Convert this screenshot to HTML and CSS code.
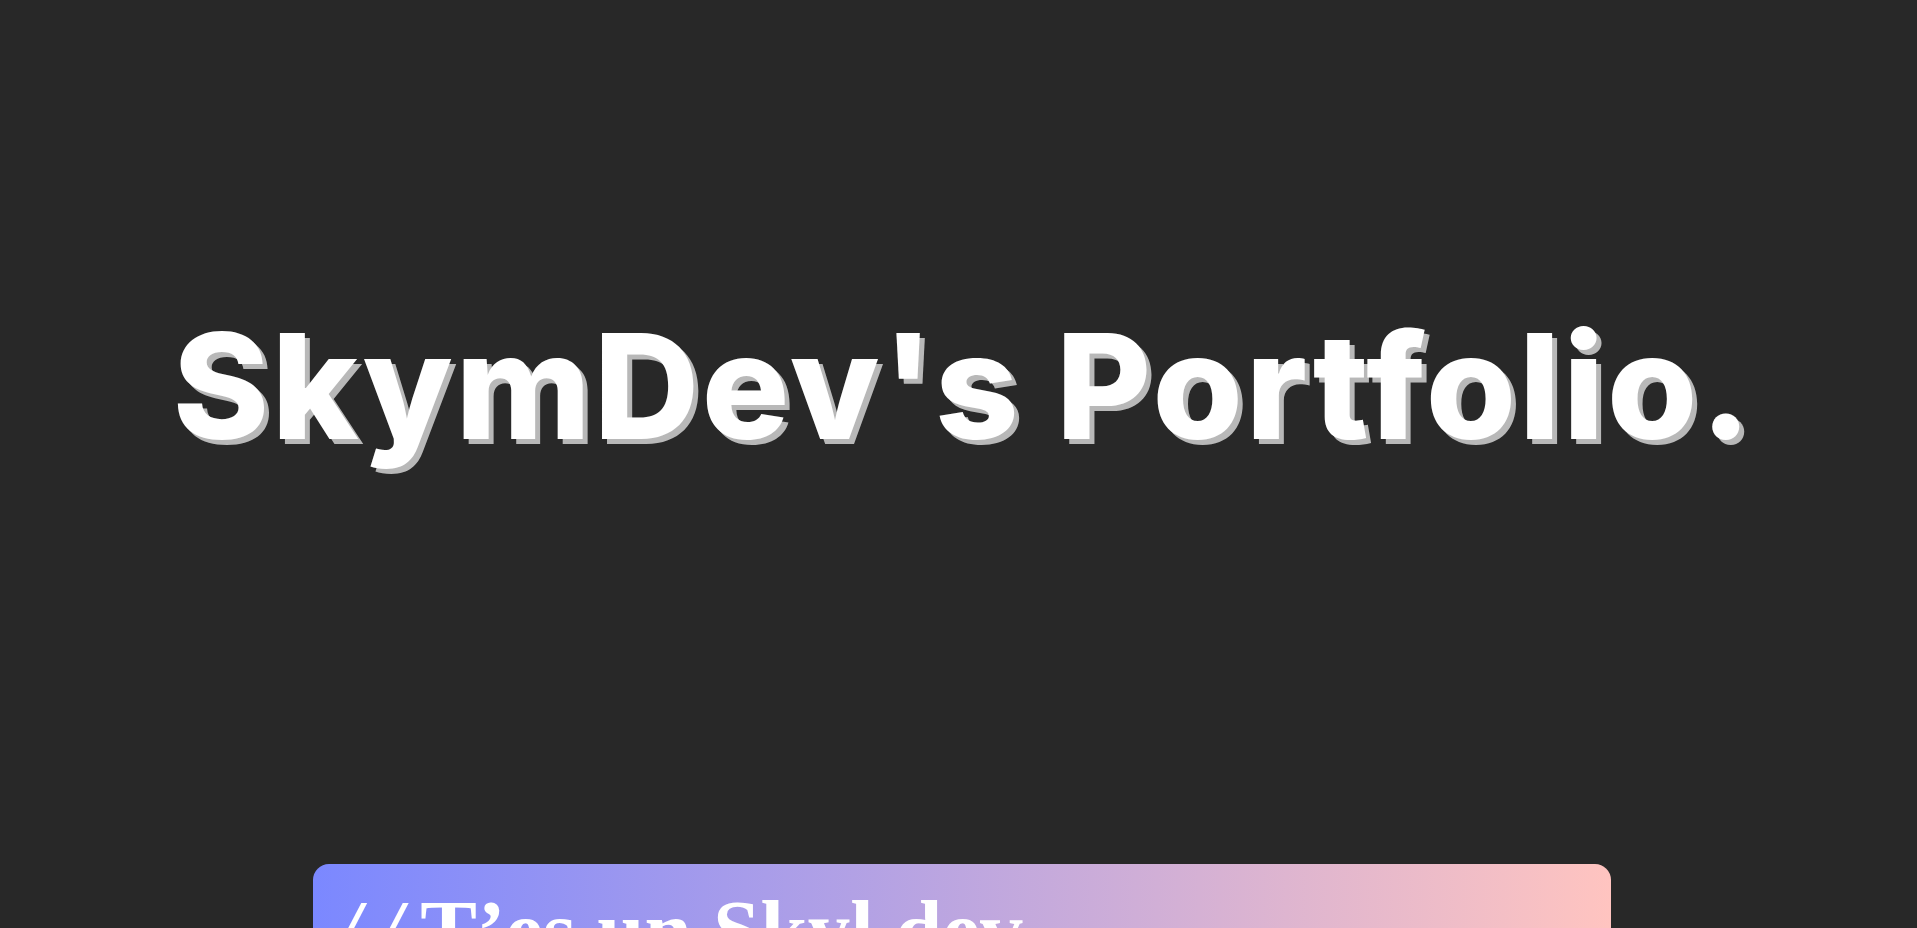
FILE: index.html
```html
<!DOCTYPE html>
<html lang="en">
<head>
<meta charset="utf-8">
<title>SkymDev's Portfolio</title>
<link rel="stylesheet" href="styles.css">
</head>
<body>
  <header class="hero">
    <h1 class="hero-title">SkymDev's Portfolio.</h1>
  </header>
  <main class="content">
    <section class="intro-card">
      <p class="intro-quote"><span class="slashes">//</span>T’es un Skyl dev</p>
    </section>
  </main>
</body>
</html>
```
FILE: styles.css
```css
html, body {
  margin: 0;
  padding: 0;
  background: #282828;
  overflow: hidden;
}

.hero {
  box-sizing: border-box;
  height: 864px;
  padding: 313px 0 0 10px;
}

.hero-title {
  margin: 0;
  font-family: "Inter", "Lato", sans-serif;
  font-weight: 800;
  font-size: 146px;
  line-height: 1;
  color: #ffffff;
  text-align: center;
  letter-spacing: 2.7px;
  text-shadow: 5px 5px 0 #b8b8b8;
  white-space: nowrap;
}

.content {
  display: flex;
}

.intro-card {
  box-sizing: border-box;
  width: 1298px;
  height: 400px;
  margin-left: 313px;
  border-radius: 16px;
  background: linear-gradient(90deg, #7b88ff 0%, #ffc4c0 100%);
  padding: 18px 0 0 24px;
}

.intro-quote {
  margin: 0;
  font-family: "Liberation Serif", "Times New Roman", serif;
  font-weight: 700;
  font-size: 85px;
  line-height: 1.15;
  color: #ffffff;
  white-space: nowrap;
}

.slashes {
  font-style: italic;
  letter-spacing: 18px;
}
```
